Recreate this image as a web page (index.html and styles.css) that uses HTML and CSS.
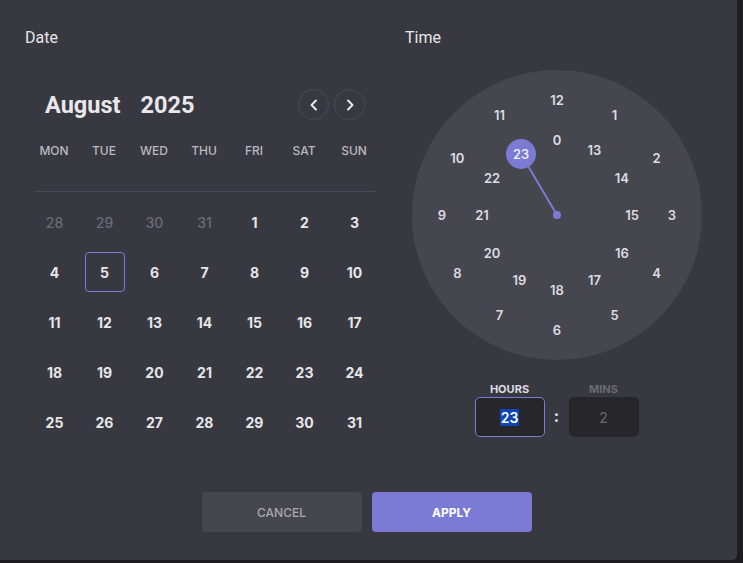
FILE: index.html
```html
<!DOCTYPE html>
<html>
<head>
    <meta charset="UTF-8">
    <title>Date &amp; Time</title>
    <link rel="stylesheet" href="styles.css">
</head>
<body>
<div class="picker">
    <div class="panels">
        <div class="datePanel">
            <div class="title">Date</div>
            <div class="cal">
                <div class="calHead">
                    <div class="month"><span>August</span><span>2025</span></div>
                    <div class="nav">
                        <button class="navBtn"><svg width="12" height="12" viewBox="0 0 12 12"><path d="M8 1.5 3.5 6 8 10.5" fill="none" stroke="#e8e8ec" stroke-width="2" stroke-linecap="round" stroke-linejoin="round"/></svg></button>
                        <button class="navBtn"><svg width="12" height="12" viewBox="0 0 12 12"><path d="M4 1.5 8.5 6 4 10.5" fill="none" stroke="#e8e8ec" stroke-width="2" stroke-linecap="round" stroke-linejoin="round"/></svg></button>
                    </div>
                </div>
                <ul class="weekdays">
                    <li>MON</li><li>TUE</li><li>WED</li><li>THU</li><li>FRI</li><li>SAT</li><li>SUN</li>
                </ul>
                <div class="line"></div>
                <ul class="days">
                    <li class="out">28</li><li class="out">29</li><li class="out">30</li><li class="out">31</li><li>1</li><li>2</li><li>3</li>
                    <li>4</li><li class="cur"><span>5</span></li><li>6</li><li>7</li><li>8</li><li>9</li><li>10</li>
                    <li>11</li><li>12</li><li>13</li><li>14</li><li>15</li><li>16</li><li>17</li>
                    <li>18</li><li>19</li><li>20</li><li>21</li><li>22</li><li>23</li><li>24</li>
                    <li>25</li><li>26</li><li>27</li><li>28</li><li>29</li><li>30</li><li>31</li>
                </ul>
            </div>
        </div>
        <div class="timePanel">
            <div class="title">Time</div>
            <div class="clock">
                <svg class="hand" width="290" height="290" viewBox="0 0 290 290">
                    <line x1="145" y1="145" x2="109" y2="84" stroke="#7b7bd6" stroke-width="2"/>
                    <circle cx="145" cy="145" r="4" fill="#7b7bd6"/>
                    <circle cx="109" cy="84" r="15" fill="#7b7bd6"/>
                </svg>
                <!-- outer ring 1-12, inner ring 13-23 and 0 -->
                <span class="num" style="--a:0deg">12</span>
                <span class="num" style="--a:30deg">1</span>
                <span class="num" style="--a:60deg">2</span>
                <span class="num" style="--a:90deg">3</span>
                <span class="num" style="--a:120deg">4</span>
                <span class="num" style="--a:150deg">5</span>
                <span class="num" style="--a:180deg">6</span>
                <span class="num" style="--a:210deg">7</span>
                <span class="num" style="--a:240deg">8</span>
                <span class="num" style="--a:270deg">9</span>
                <span class="num" style="--a:300deg">10</span>
                <span class="num" style="--a:330deg">11</span>
                <span class="num inner" style="--a:0deg">0</span>
                <span class="num inner" style="--a:30deg">13</span>
                <span class="num inner" style="--a:60deg">14</span>
                <span class="num inner" style="--a:90deg">15</span>
                <span class="num inner" style="--a:120deg">16</span>
                <span class="num inner" style="--a:150deg">17</span>
                <span class="num inner" style="--a:180deg">18</span>
                <span class="num inner" style="--a:210deg">19</span>
                <span class="num inner" style="--a:240deg">20</span>
                <span class="num inner" style="--a:270deg">21</span>
                <span class="num inner" style="--a:300deg">22</span>
                <span class="num sel">23</span>
            </div>
            <div class="fields">
                <div class="field">
                    <div class="label">HOURS</div>
                    <div class="box active"><span class="mark">23</span></div>
                </div>
                <div class="colon">:</div>
                <div class="field">
                    <div class="label dim">MINS</div>
                    <div class="box dimText">2</div>
                </div>
            </div>
        </div>
    </div>
    <div class="footer">
        <button class="btn cancel">CANCEL</button>
        <button class="btn apply">APPLY</button>
    </div>
</div>
</body>
</html>
```

FILE: styles.css
```css
* {
    margin: 0;
    padding: 0;
    box-sizing: border-box;
}

ul, li {
    list-style: none;
}

body {
    background: #1d1d21;
    font-family: Inter, Roboto, sans-serif;
    color: #e4e4e8;
}

.picker {
    width: 737px;
    height: 560px;
    background: #383840;
    border-radius: 0 0 5px 0;
    padding-top: 28px;
}

.panels {
    display: flex;
    height: 419px;
}

.title {
    font-family: Roboto, sans-serif;
    font-size: 16px;
    line-height: 20px;
    height: 20px;
    color: #e6e6ea;
    padding-left: 25px;
}

/* date side */
.datePanel {
    width: 380px;
}

.cal {
    width: 350px;
    margin: 38px 0 0 29px;
}

.calHead {
    display: flex;
    justify-content: space-between;
    align-items: center;
    height: 36px;
    padding: 1px 14px 0 16px;
}

.month {
    display: flex;
    gap: 20px;
    font-family: Roboto, sans-serif;
    font-size: 23.5px;
    font-weight: 700;
    color: #e8e8ec;
}

.nav {
    display: flex;
    gap: 5px;
}

.navBtn {
    width: 31px;
    height: 31px;
    border-radius: 50%;
    border: 1px solid #4b4b55;
    background: transparent;
    display: flex;
    align-items: center;
    justify-content: center;
}

.weekdays {
    display: grid;
    grid-template-columns: repeat(7, 50px);
    margin-top: 19px;
    height: 20px;
}

.weekdays li {
    text-align: center;
    line-height: 20px;
    font-size: 12px;
    font-weight: 500;
    color: #b9b9c0;
}

.line {
    height: 1px;
    margin: 30px 4px 0 6px;
    background: #4a4a54;
}

.days {
    display: grid;
    grid-template-columns: repeat(7, 50px);
    grid-auto-rows: 50px;
    margin: 5px 0 0 0.5px;
}

.days li {
    display: flex;
    align-items: center;
    justify-content: center;
    font-size: 14px;
    font-weight: 700;
    color: #e6e6ea;
}

.days li.out {
    color: #6c6c76;
    font-weight: 500;
}

.days li.cur span {
    width: 40px;
    height: 40px;
    display: flex;
    align-items: center;
    justify-content: center;
    border: 1px solid #7b7bd6;
    border-radius: 4px;
}

/* time side */
.timePanel {
    width: 357px;
}

.clock {
    position: relative;
    width: 290px;
    height: 290px;
    margin: 22px 0 0 32px;
    border-radius: 50%;
    background: #46464f;
}

.hand {
    position: absolute;
    left: 0;
    top: 0;
}

.num {
    position: absolute;
    left: 130px;
    top: 135px;
    width: 30px;
    height: 20px;
    line-height: 20px;
    text-align: center;
    font-size: 13px;
    font-weight: 600;
    color: #dcdce2;
    transform: rotate(var(--a)) translateY(-115px) rotate(calc(-1 * var(--a)));
}

.num.inner {
    transform: rotate(var(--a)) translateY(-75px) rotate(calc(-1 * var(--a)));
}

.num.sel {
    left: 94px;
    top: 74px;
    transform: none;
    color: #f2f2f6;
    font-weight: 500;
}

.fields {
    display: flex;
    align-items: flex-end;
    justify-content: center;
    gap: 8px;
    margin: 22px 0 0 -4px;
}

.field {
    width: 70px;
}

.label {
    height: 14px;
    line-height: 14px;
    margin-bottom: 1px;
    text-align: center;
    font-size: 11px;
    font-weight: 700;
    color: #dcdce2;
}

.label.dim {
    color: #6a6a74;
}

.box {
    height: 40px;
    border-radius: 5px;
    background: #26262b;
    display: flex;
    align-items: center;
    justify-content: center;
    font-size: 14px;
}

.box.active {
    border: 1px solid #7b7bd6;
}

.mark {
    background: #0f45b8;
    color: #ffffff;
    font-weight: 600;
    padding: 0 1px;
    line-height: 17px;
}

.dimText {
    color: #6a6a74;
}

.colon {
    width: 8px;
    height: 40px;
    line-height: 38px;
    text-align: center;
    font-size: 16px;
    font-weight: 700;
    color: #e0e0e4;
}

/* buttons */
.footer {
    display: flex;
    justify-content: center;
    gap: 10px;
    margin-top: 45px;
    padding-right: 4px;
}

.btn {
    width: 160px;
    height: 40px;
    border: none;
    border-radius: 4px;
    font-family: Inter, Roboto, sans-serif;
    font-size: 12px;
    font-weight: 500;
}

.cancel {
    background: #46464f;
    color: #a8a8b0;
}

.apply {
    background: #7b7bd6;
    color: #ffffff;
    font-weight: 700;
}
```
